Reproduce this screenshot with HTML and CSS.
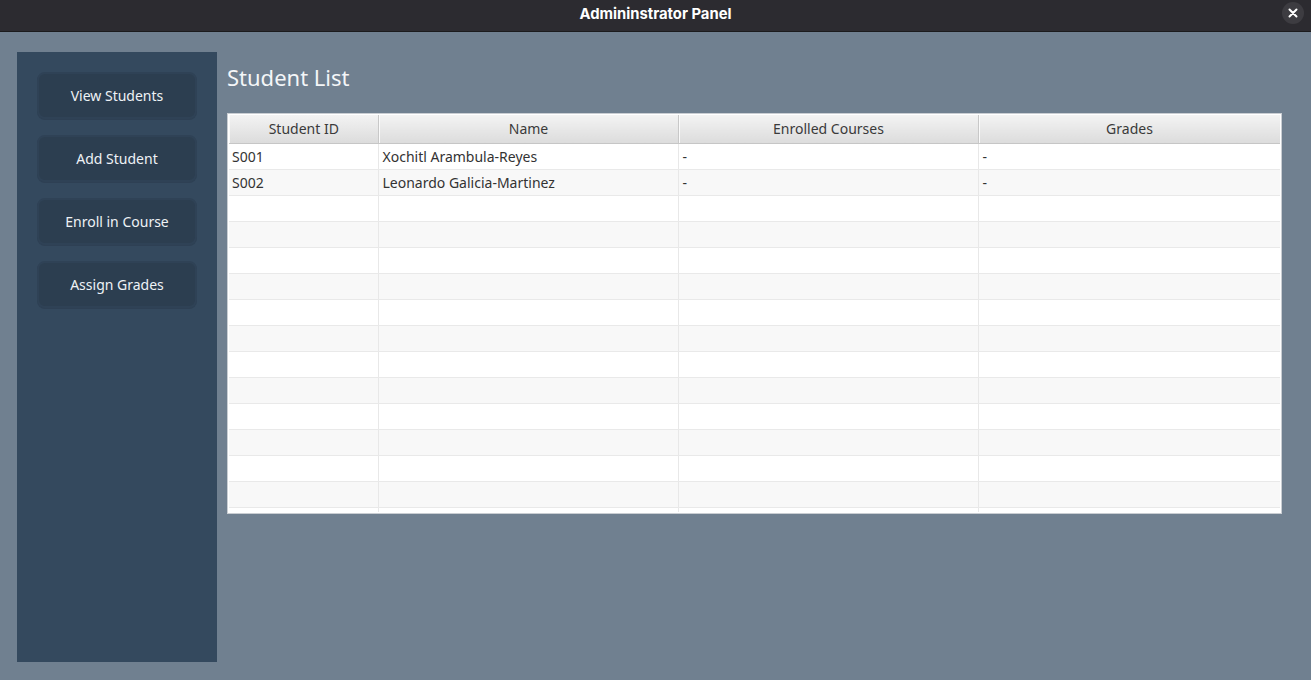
FILE: index.html
```html
<!DOCTYPE html>
<html lang="en">
<head>
   <meta charset="UTF-8">
   <title>Admininstrator Panel</title>
   <link rel="stylesheet" href="styles.css">
</head>
<body>
<div class="titlebar">
   <span class="titlebar_text">Admininstrator Panel</span>
   <div class="close_btn">
      <svg width="10" height="10" viewBox="0 0 10 10"><path d="M1.5 1.5 L8.5 8.5 M8.5 1.5 L1.5 8.5" stroke="#ffffff" stroke-width="2" stroke-linecap="round"/></svg>
   </div>
</div>

<div class="root_container">
   <div class="sidebar">
      <button class="side_btn">View Students</button>
      <button class="side_btn">Add Student</button>
      <button class="side_btn">Enroll in Course</button>
      <button class="side_btn">Assign Grades</button>
   </div>

   <div class="content">
      <h1 class="page_title">Student List</h1>
      <div class="table_box">
         <div class="table_view">
            <table class="students">
               <colgroup>
                  <col class="col_id">
                  <col class="col_wide">
                  <col class="col_wide">
                  <col class="col_last">
               </colgroup>
               <thead>
                  <tr><th>Student ID</th><th>Name</th><th>Enrolled Courses</th><th>Grades</th></tr>
               </thead>
               <tbody>
                  <tr><td>S001</td><td>Xochitl Arambula-Reyes</td><td>-</td><td>-</td></tr>
                  <tr><td>S002</td><td>Leonardo Galicia-Martinez</td><td>-</td><td>-</td></tr>
                  <tr><td></td><td></td><td></td><td></td></tr>
                  <tr><td></td><td></td><td></td><td></td></tr>
                  <tr><td></td><td></td><td></td><td></td></tr>
                  <tr><td></td><td></td><td></td><td></td></tr>
                  <tr><td></td><td></td><td></td><td></td></tr>
                  <tr><td></td><td></td><td></td><td></td></tr>
                  <tr><td></td><td></td><td></td><td></td></tr>
                  <tr><td></td><td></td><td></td><td></td></tr>
                  <tr><td></td><td></td><td></td><td></td></tr>
                  <tr><td></td><td></td><td></td><td></td></tr>
                  <tr><td></td><td></td><td></td><td></td></tr>
                  <tr><td></td><td></td><td></td><td></td></tr>
                  <tr><td></td><td></td><td></td><td></td></tr>
               </tbody>
            </table>
         </div>
      </div>
   </div>
</div>
</body>
</html>
```

FILE: styles.css
```css
* {
   box-sizing: border-box;
}

html, body {
   margin: 0;
   height: 100%;
}

body {
   display: flex;
   flex-direction: column;
   background-color: #708090;
   font-family: "Noto Sans", "Open Sans", sans-serif;
   overflow: hidden;
}

.titlebar {
   position: relative;
   height: 32px;
   flex: none;
   display: flex;
   align-items: center;
   justify-content: center;
   background-color: #2c2b30;
   border-bottom: 1px solid #1b1b1d;
}

.titlebar_text {
   color: #ffffff;
   font-family: Inter, "Noto Sans", sans-serif;
   font-weight: 700;
   font-size: 14.8px;
   margin-top: -4px;
}

.close_btn {
   position: absolute;
   right: 7px;
   top: 2px;
   width: 22px;
   height: 22px;
   border-radius: 50%;
   background-color: #3d3c41;
   display: flex;
   align-items: center;
   justify-content: center;
}

.root_container {
   flex: 1;
   display: flex;
   padding: 20px 29px 18px 17px;
   gap: 10px;
   min-height: 0;
}

.sidebar {
   width: 200px;
   flex: none;
   background-color: #34495e;
   display: flex;
   flex-direction: column;
   align-items: flex-start;
   gap: 16px;
   padding: 20px 20px;
}

.side_btn {
   width: 160px;
   height: 47px;
   background-color: #2c3e50;
   border: 2px solid #2f4256;
   border-radius: 8px;
   color: #eef2f6;
   font-family: "Noto Sans", "Open Sans", sans-serif;
   font-size: 14px;
   padding: 0;
   box-shadow: 0 1px 0 #2e4054;
}

.content {
   flex: 1;
   display: flex;
   flex-direction: column;
   min-width: 0;
}

.page_title {
   margin: 10px 0 0 0;
   height: 51px;
   font-weight: 400;
   font-size: 22px;
   color: #f4f6f8;
   line-height: 30px;
}

.table_box {
   height: 401px;
   background-color: #ffffff;
   border: 1px solid #c9cdd2;
   padding: 1px;
}

.table_view {
   height: 100%;
   overflow: hidden;
}

.students {
   table-layout: fixed;
   border-collapse: collapse;
   width: 1051px;
   font-size: 14px;
   color: #333333;
}

.col_id {
   width: 149px;
}

.col_wide {
   width: 300px;
}

.col_last {
   width: 302px;
}

.students th {
   height: 28px;
   padding: 0 0 0 1px;
   font-weight: 400;
   color: #3a3a3a;
   background: linear-gradient(#f3f3f3, #dcdcdc);
   border-right: 1px solid #c8c8c8;
   border-bottom: 1px solid #c6c6c6;
   box-shadow: inset 1px 0 0 #fafafa;
}

.students td {
   height: 26px;
   padding: 0 3px 0 4px;
   border-right: 1px solid #e8e8e8;
   border-bottom: 1px solid #e9e9e9;
   white-space: nowrap;
}

.students td:first-child {
   padding-left: 3px;
}

.students tbody tr:nth-child(even) {
   background-color: #f8f8f8;
}
```
